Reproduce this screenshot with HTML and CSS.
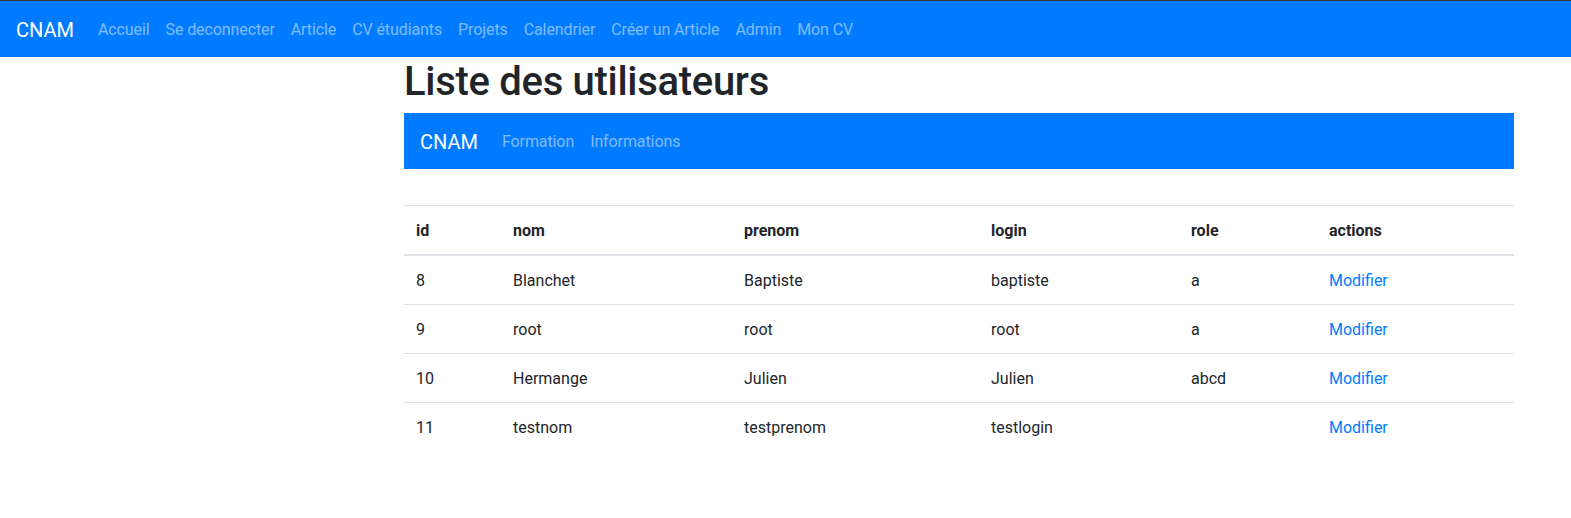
FILE: index.html
```html
<!DOCTYPE html>
<html lang="fr">
<head>
<meta charset="utf-8">
<title>Liste des utilisateurs</title>
<link rel="stylesheet" href="styles.css">
</head>
<body>
<nav class="navbar">
  <a class="brand" href="#">CNAM</a>
  <ul class="nav">
    <li><a class="nav-link" href="#">Accueil</a></li>
    <li><a class="nav-link" href="#">Se deconnecter</a></li>
    <li><a class="nav-link" href="#">Article</a></li>
    <li><a class="nav-link" href="#">CV étudiants</a></li>
    <li><a class="nav-link" href="#">Projets</a></li>
    <li><a class="nav-link" href="#">Calendrier</a></li>
    <li><a class="nav-link" href="#">Créer un Article</a></li>
    <li><a class="nav-link" href="#">Admin</a></li>
    <li><a class="nav-link" href="#">Mon CV</a></li>
  </ul>
</nav>
<main class="content">
  <h1 class="title">Liste des utilisateurs</h1>
  <nav class="navbar sub">
    <a class="brand" href="#">CNAM</a>
    <ul class="nav">
      <li><a class="nav-link" href="#">Formation</a></li>
      <li><a class="nav-link" href="#">Informations</a></li>
    </ul>
  </nav>
  <table class="table">
    <thead>
      <tr><th class="c-id">id</th><th class="c-nom">nom</th><th class="c-prenom">prenom</th><th class="c-login">login</th><th class="c-role">role</th><th>actions</th></tr>
    </thead>
    <tbody>
      <tr><td>8</td><td>Blanchet</td><td>Baptiste</td><td>baptiste</td><td>a</td><td><a class="link" href="#">Modifier</a></td></tr>
      <tr><td>9</td><td>root</td><td>root</td><td>root</td><td>a</td><td><a class="link" href="#">Modifier</a></td></tr>
      <tr><td>10</td><td>Hermange</td><td>Julien</td><td>Julien</td><td>abcd</td><td><a class="link" href="#">Modifier</a></td></tr>
      <tr><td>11</td><td>testnom</td><td>testprenom</td><td>testlogin</td><td></td><td><a class="link" href="#">Modifier</a></td></tr>
    </tbody>
  </table>
</main>
</body>
</html>
```
FILE: styles.css
```css
* { box-sizing: border-box; }
body {
  margin: 0;
  font-family: Roboto, "Liberation Sans", sans-serif;
  font-size: 16px;
  line-height: 1.5;
  color: #212529;
  background: #fff;
  border-top: 1px solid #343a40;
}
a { text-decoration: none; }
.navbar {
  display: flex;
  align-items: center;
  height: 56px;
  padding: 9px 16px 7px;
  background: #007bff;
}
.brand {
  color: #fff;
  font-size: 20px;
  line-height: 30px;
  padding: 5px 0;
  margin-right: 16px;
}
.nav {
  display: flex;
  list-style: none;
  margin: 0;
  padding: 0;
}
.nav-link {
  display: block;
  padding: 8px;
  color: rgba(255,255,255,.5);
  letter-spacing: -0.1px;
}
.content {
  margin-left: 404px;
  width: 1110px;
}
.title {
  margin: 0 0 8px;
  padding-top: 1px;
  height: 48px;
  font-size: 40px;
  font-weight: 500;
  line-height: 48px;
  letter-spacing: -0.3px;
}
.table {
  width: 100%;
  margin-top: 36px;
  border-collapse: collapse;
}
.table th, .table td {
  padding: 13px 12px 11px;
  text-align: left;
  vertical-align: top;
  border-top: 1px solid #dee2e6;
}
.table th { font-weight: 700; }
.table thead th { border-bottom: 2px solid #dee2e6; }
.c-id { width: 97px; }
.c-nom { width: 231px; }
.c-prenom { width: 247px; }
.c-login { width: 200px; }
.c-role { width: 138px; }
.link { color: #007bff; }
```
